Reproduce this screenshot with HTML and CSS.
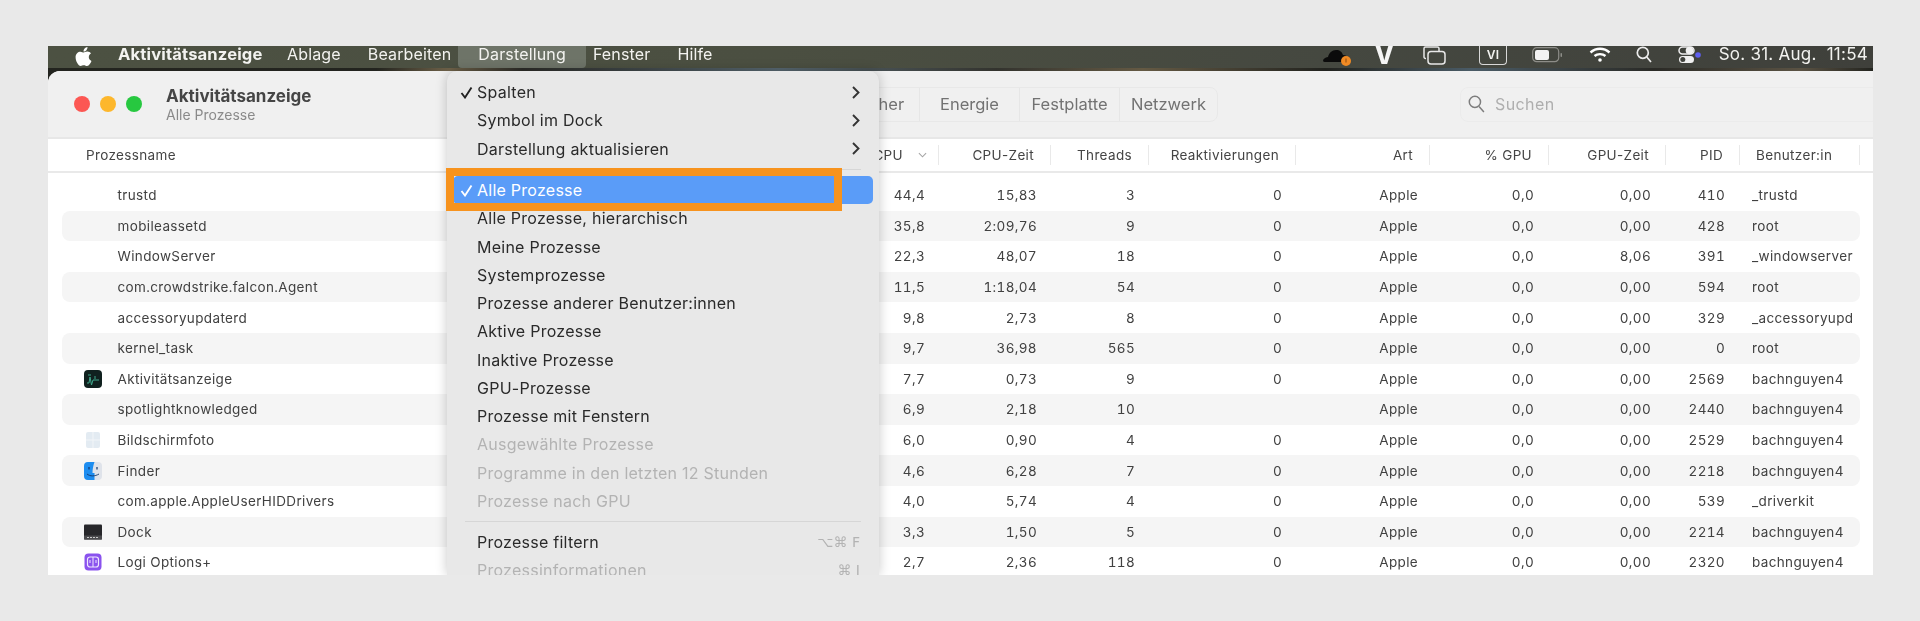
FILE: index.html
```html
<!DOCTYPE html>
<html lang="de">
<head>
<meta charset="utf-8">
<title>Aktivitätsanzeige</title>
<link rel="stylesheet" href="styles.css">
</head>
<body>
<div class="screen">
  <header class="menubar">
    <svg class="apple" viewBox="0 30 384 452"><path fill="#fff" d="M318.7 268.7c-.2-36.7 16.4-64.4 50-84.8-18.8-26.9-47.2-41.7-84.7-44.6-35.5-2.8-74.3 20.7-88.5 20.7-15 0-49.4-19.7-76.4-19.7C63.3 141.2 4 184.8 4 273.5q0 39.3 14.4 81.2c12.8 36.7 59 126.7 107.2 125.2 25.2-.6 43-17.9 75.8-17.9 31.8 0 48.3 17.9 76.4 17.9 48.6-.7 90.4-82.5 102.6-119.3-65.2-30.7-61.7-90-61.7-91.9zm-56.6-164.2c27.3-32.4 24.8-61.9 24-72.5-24.1 1.4-52 16.4-67.9 34.9-17.5 19.8-27.8 44.3-25.6 71.9 26.1 2 49.9-11.4 69.5-34.3z"/></svg>
    <span class="mb-item mb-app">Aktivitätsanzeige</span>
    <span class="mb-item">Ablage</span>
    <span class="mb-item">Bearbeiten</span>
    <span class="mb-item mb-open">Darstellung</span>
    <span class="mb-item">Fenster</span>
    <span class="mb-item">Hilfe</span>
    <div class="status">
      <svg class="st st-cloud" viewBox="0 0 30 20"><path fill="#0b0b0b" d="M1 15c0-2 2-3.500 5-4 1-4 4-7 8-7 4 0 6 2 7 5 3 0 5 2 5 4 0 2-1 3-3 3H4c-2 0-3-.5-3-1z"/><circle cx="24" cy="15" r="5" fill="#f08a24"/><path stroke="#8a4a10" stroke-width="1" d="M24 12.500v4"/></svg>
      <span class="st st-v">V</span>
      <svg class="st st-copy" viewBox="0 0 23 19" fill="none" stroke="#e8e8e8" stroke-width="1.500"><path d="M3 12.500H2.500a1.500 1.500 0 0 1-1.500-1.500V2.500A1.500 1.500 0 0 1 2.500 1h12A1.500 1.500 0 0 1 16 2.500V5"/><rect x="5" y="5.500" width="17" height="12.500" rx="3"/></svg>
      <span class="st st-vi">VI</span>
      <svg class="st st-batt" viewBox="0 0 31 16"><rect x=".7" y=".7" width="26" height="14" rx="4" fill="none" stroke="#8d8d88" stroke-width="1.200"/><rect x="3" y="3" width="14" height="10" rx="2" fill="#f2f2f2"/><rect x="28.500" y="6" width="1.500" height="4" rx=".7" fill="#8d8d88"/></svg>
      <svg class="st st-wifi" viewBox="0 0 22 17" fill="none" stroke="#fff" stroke-width="2.400"><path d="M1.500 6.500C7 1.500 15 1.500 20.500 6.500"/><path d="M5.500 10C8.500 7.500 13.500 7.500 16.500 10"/><circle cx="11" cy="14" r="1.800" fill="#fff" stroke="none"/></svg>
      <svg class="st st-search" viewBox="0 0 16 17" fill="none" stroke="#ececec" stroke-width="1.700"><circle cx="6.800" cy="6.800" r="5.500"/><path d="M10.800 11l4.200 5"/></svg>
      <svg class="st st-cc" viewBox="0 0 23 18"><rect x="1" y="1" width="15" height="7" rx="3.500" fill="none" stroke="#f0f0f0" stroke-width="1.500"/><circle cx="11.500" cy="4.500" r="3.800" fill="#f0f0f0"/><rect x="1" y="10" width="15" height="7" rx="3.500" fill="#f0f0f0"/><circle cx="4.800" cy="13.500" r="2.500" fill="#40423c"/><circle cx="20" cy="9" r="2.800" fill="#5f5ff0"/></svg>
      <span class="clock">So. 31. Aug.&nbsp; 11:54</span>
    </div>
  </header>

  <main class="window">
    <div class="toolbar">
      <div class="lights"><i class="light red"></i><i class="light yellow"></i><i class="light green"></i></div>
      <div class="titles">
        <div class="title">Aktivitätsanzeige</div>
        <div class="subtitle">Alle Prozesse</div>
      </div>
      <div class="tabs">
        <span class="tab">Speicher</span>
        <span class="tab">Energie</span>
        <span class="tab">Festplatte</span>
        <span class="tab tab-last">Netzwerk</span>
      </div>
      <div class="search">
        <svg class="search-icon" viewBox="0 0 16 17" fill="none" stroke="#7d7d7d" stroke-width="1.400"><circle cx="6.500" cy="6.500" r="5.300"/><path d="M10.400 10.800l4.600 5.200"/></svg>
        <span>Suchen</span>
      </div>
    </div>

    <div class="thead">
      <div class="th th-name">Prozessname</div>
      <div class="th th-cpu">CPU<svg class="sort" viewBox="0 0 10 6" fill="none" stroke="#a5a5a5" stroke-width="1.200"><path d="M1 1l4 4 4-4"/></svg></div>
      <div class="th">CPU-Zeit</div>
      <div class="th">Threads</div>
      <div class="th">Reaktivierungen</div>
      <div class="th">Art</div>
      <div class="th">% GPU</div>
      <div class="th">GPU-Zeit</div>
      <div class="th">PID</div>
      <div class="th th-user">Benutzer:in</div>
    </div>

    <div class="tbody">
      <div class="row"><div class="name"><span class="ico"></span>trustd</div><div class="n">44,4</div><div class="n">15,83</div><div class="n">3</div><div class="n">0</div><div class="n art">Apple</div><div class="n">0,0</div><div class="n">0,00</div><div class="n">410</div><div class="user">_trustd</div></div>
      <div class="row"><div class="name"><span class="ico"></span>mobileassetd</div><div class="n">35,8</div><div class="n">2:09,76</div><div class="n">9</div><div class="n">0</div><div class="n art">Apple</div><div class="n">0,0</div><div class="n">0,00</div><div class="n">428</div><div class="user">root</div></div>
      <div class="row"><div class="name"><span class="ico"></span>WindowServer</div><div class="n">22,3</div><div class="n">48,07</div><div class="n">18</div><div class="n">0</div><div class="n art">Apple</div><div class="n">0,0</div><div class="n">8,06</div><div class="n">391</div><div class="user">_windowserver</div></div>
      <div class="row"><div class="name"><span class="ico"></span>com.crowdstrike.falcon.Agent</div><div class="n">11,5</div><div class="n">1:18,04</div><div class="n">54</div><div class="n">0</div><div class="n art">Apple</div><div class="n">0,0</div><div class="n">0,00</div><div class="n">594</div><div class="user">root</div></div>
      <div class="row"><div class="name"><span class="ico"></span>accessoryupdaterd</div><div class="n">9,8</div><div class="n">2,73</div><div class="n">8</div><div class="n">0</div><div class="n art">Apple</div><div class="n">0,0</div><div class="n">0,00</div><div class="n">329</div><div class="user">_accessoryupdaterd</div></div>
      <div class="row"><div class="name"><span class="ico"></span>kernel_task</div><div class="n">9,7</div><div class="n">36,98</div><div class="n">565</div><div class="n">0</div><div class="n art">Apple</div><div class="n">0,0</div><div class="n">0,00</div><div class="n">0</div><div class="user">root</div></div>
      <div class="row"><div class="name"><span class="ico"><svg viewBox="0 0 18 18"><rect width="18" height="18" rx="4" fill="#10211f"/><path d="M3 13h2l1-6 1.500 8L9 10h6M4 5h3M11 6v3" fill="none" stroke="#3fa88c" stroke-width="1"/></svg></span>Aktivitätsanzeige</div><div class="n">7,7</div><div class="n">0,73</div><div class="n">9</div><div class="n">0</div><div class="n art">Apple</div><div class="n">0,0</div><div class="n">0,00</div><div class="n">2569</div><div class="user">bachnguyen4</div></div>
      <div class="row"><div class="name"><span class="ico"></span>spotlightknowledged</div><div class="n">6,9</div><div class="n">2,18</div><div class="n">10</div><div class="n"></div><div class="n art">Apple</div><div class="n">0,0</div><div class="n">0,00</div><div class="n">2440</div><div class="user">bachnguyen4</div></div>
      <div class="row"><div class="name"><span class="ico"><svg viewBox="0 0 18 18"><rect x="2" y="1" width="14" height="16" rx="2" fill="#e3ebf2"/><path d="M9 1v16M2 9h14" stroke="#f2f5f8" stroke-width="1"/></svg></span>Bildschirmfoto</div><div class="n">6,0</div><div class="n">0,90</div><div class="n">4</div><div class="n">0</div><div class="n art">Apple</div><div class="n">0,0</div><div class="n">0,00</div><div class="n">2529</div><div class="user">bachnguyen4</div></div>
      <div class="row"><div class="name"><span class="ico"><svg viewBox="0 0 18 18"><rect width="18" height="18" rx="4" fill="#dfe3ea"/><path d="M4 0h6.500C9 4 8.500 8 8.500 11H10.500V18H4a4 4 0 0 1-4-4V4a4 4 0 0 1 4-4z" fill="#1d8df0"/><path d="M3 12c3 2.500 8 2.500 12 0" fill="none" stroke="#12366a" stroke-width=".9"/><path d="M5 5v2.500M13 5v2.500" stroke="#12366a" stroke-width="1.200"/></svg></span>Finder</div><div class="n">4,6</div><div class="n">6,28</div><div class="n">7</div><div class="n">0</div><div class="n art">Apple</div><div class="n">0,0</div><div class="n">0,00</div><div class="n">2218</div><div class="user">bachnguyen4</div></div>
      <div class="row"><div class="name"><span class="ico"></span>com.apple.AppleUserHIDDrivers</div><div class="n">4,0</div><div class="n">5,74</div><div class="n">4</div><div class="n">0</div><div class="n art">Apple</div><div class="n">0,0</div><div class="n">0,00</div><div class="n">539</div><div class="user">_driverkit</div></div>
      <div class="row"><div class="name"><span class="ico"><svg viewBox="0 0 18 18"><rect y="1.500" width="18" height="15" rx="1" fill="#27272a"/><rect y="12.500" width="18" height="4" fill="#4a4a4d"/><path d="M3 14.500h12" stroke="#c8c8c8" stroke-width="1" stroke-dasharray="2 1"/></svg></span>Dock</div><div class="n">3,3</div><div class="n">1,50</div><div class="n">5</div><div class="n">0</div><div class="n art">Apple</div><div class="n">0,0</div><div class="n">0,00</div><div class="n">2214</div><div class="user">bachnguyen4</div></div>
      <div class="row"><div class="name"><span class="ico"><svg viewBox="0 0 18 18"><rect width="17" height="17" x=".5" y=".5" rx="4" fill="#8a52ee"/><rect x="3.500" y="4" width="11" height="10" rx="2.500" fill="none" stroke="#f0e8ff" stroke-width="1.200"/><path d="M9 4v10M6 7v3M12 7v3" stroke="#f0e8ff" stroke-width="1"/></svg></span>Logi Options+</div><div class="n">2,7</div><div class="n">2,36</div><div class="n">118</div><div class="n">0</div><div class="n art">Apple</div><div class="n">0,0</div><div class="n">0,00</div><div class="n">2320</div><div class="user">bachnguyen4</div></div>
    </div>
  </main>

  <nav class="menu">
    <div class="mi"><svg class="check" viewBox="0 0 13 13" fill="none" stroke="#222" stroke-width="1.900"><path d="M1.500 7l3.500 4.500L11.500 1.500"/></svg>Spalten<svg class="chev" viewBox="0 0 8 13" fill="none" stroke="#333" stroke-width="1.900"><path d="M1 1l5.500 5.500L1 12"/></svg></div>
    <div class="mi">Symbol im Dock<svg class="chev" viewBox="0 0 8 13" fill="none" stroke="#333" stroke-width="1.900"><path d="M1 1l5.500 5.500L1 12"/></svg></div>
    <div class="mi">Darstellung aktualisieren<svg class="chev" viewBox="0 0 8 13" fill="none" stroke="#333" stroke-width="1.900"><path d="M1 1l5.500 5.500L1 12"/></svg></div>
    <div class="sep"></div>
    <div class="mi mi-active"><svg class="check" viewBox="0 0 13 13" fill="none" stroke="#fff" stroke-width="1.900"><path d="M1.500 7l3.500 4.500L11.500 1.500"/></svg>Alle Prozesse</div>
    <div class="mi">Alle Prozesse, hierarchisch</div>
    <div class="mi">Meine Prozesse</div>
    <div class="mi">Systemprozesse</div>
    <div class="mi">Prozesse anderer Benutzer:innen</div>
    <div class="mi">Aktive Prozesse</div>
    <div class="mi">Inaktive Prozesse</div>
    <div class="mi">GPU-Prozesse</div>
    <div class="mi">Prozesse mit Fenstern</div>
    <div class="mi mi-off">Ausgewählte Prozesse</div>
    <div class="mi mi-off">Programme in den letzten 12 Stunden</div>
    <div class="mi mi-off">Prozesse nach GPU</div>
    <div class="sep sep-low"></div>
    <div class="mi">Prozesse filtern<span class="key">⌥⌘ F</span></div>
    <div class="mi mi-off">Prozessinformationen<span class="key">⌘ I</span></div>
  </nav>
  <div class="callout"></div>
</div>
</body>
</html>
```

FILE: styles.css
```css
* { box-sizing: border-box; }
html, body { margin: 0; height: 100%; }
body {
  background: #e9e9e9;
  font-family: Inter, "Noto Sans", "Liberation Sans", sans-serif;
  overflow: hidden;
}
.screen {
  position: relative;
  width: 1825px;
  height: 529px;
  margin: 46px 0 0 48px;
  filter: blur(.45px);
  background: linear-gradient(90deg, #23241f 0, #23241f 18%, #6f6249 22%, #2c2c28 26%, #56666f 40%, #33332e 52%, #645943 60%, #22231f 70%, #4a5b66 78%, #2a2a26 88%, #5a5243 96%, #23241f 100%);
}

/* menu bar */
.menubar {
  height: 22px;
  display: flex;
  align-items: flex-start;
  padding-left: 27px;
  color: #f3f3f0;
  font-size: 16px;
  line-height: 16px;
  letter-spacing: .15px;
  background: linear-gradient(90deg, #4c5142 0, #4b4f41 40%, #454840 70%, #3f403b 100%);
  white-space: nowrap;
}
.apple { width: 17px; height: 19px; margin-top: 1px; margin-right: 12.500px; flex: none; }
.mb-item { padding: 0 13.500px; }
.mb-app { font-weight: 700; font-size: 16.600px; padding-right: 11px; }
.mb-open {
  height: 22px;
  padding: 0 20px;
  margin: 0 -6.500px;
  background: #6e7468;
  border-radius: 0 0 4px 4px;
}
.status { margin-left: auto; display: flex; align-items: flex-start; padding-right: 5px; }
.st { flex: none; display: block; }
.st-cloud { width: 30px; height: 20px; margin-right: 23px; }
.st-v { width: 16px; margin-right: 32px; font-weight: 800; font-size: 24px; line-height: 20px; text-align: center; color: #f5f5f5; }
.st-copy { width: 23px; height: 19px; margin-right: 33px; }
.st-vi {
  width: 28px; height: 19px; margin-right: 25px;
  border: 1.500px solid #d8d8d8; border-top: 0; border-radius: 0 0 4px 4px;
  font-size: 12px; line-height: 17px; text-align: center; font-weight: 600;
}
.st-batt { width: 31px; height: 16px; margin: 1px 26px 0 0; }
.st-wifi { width: 22px; height: 17px; margin-right: 25px; }
.st-search { width: 16px; height: 17px; margin-right: 26px; }
.st-cc { width: 23px; height: 18px; margin-right: 17px; }
.clock { width: 150px; text-align: right; font-size: 17px; letter-spacing: .25px; }

/* window */
.window {
  height: 504px;
  margin-top: 3px;
  background: #fff;
  border-radius: 12px 0 0 0;
  overflow: hidden;
}
.toolbar {
  height: 66px;
  display: flex;
  align-items: center;
  padding-left: 26px;
  background: #f0f0f0;
}
.lights { display: flex; gap: 10px; flex: none; }
.light { width: 16px; height: 16px; border-radius: 50%; display: block; }
.red { background: #fc5753; }
.yellow { background: #fdb72c; }
.green { background: #27c840; }
.titles { margin-left: 24px; padding-top: 2px; }
.title { font-size: 17px; line-height: 20px; font-weight: 700; color: #454545; }
.subtitle { font-size: 14px; line-height: 18px; color: #8a8a8a; }
.tabs {
  margin-left: auto;
  height: 35px;
  display: flex;
  border: 1px solid #e8e8e8;
  border-radius: 8px;
  font-size: 16.500px;
  color: #727272;
}
.tab {
  width: 100px;
  display: flex;
  align-items: center;
  justify-content: center;
  position: relative;
  border-right: 1px solid #e6e6e6;
}
.tab-last { width: 97px; border-right: 0; }
.search {
  flex: none;
  width: 420px;
  height: 35px;
  margin: 0 -7px 0 242px;
  border: 1px solid #ebebeb;
  border-radius: 8px;
  display: flex;
  align-items: center;
  padding-left: 7px;
  color: #aeaeae;
  font-size: 16px;
  letter-spacing: .4px;
}
.search-icon { width: 17px; height: 18px; margin-right: 10px; }

/* table */
.thead {
  height: 36px;
  display: grid;
  grid-template-columns: 812px 79px 112px 98px 147px 134px 119px 117px 74px 120px;
  align-items: center;
  border-top: 2px solid #e7e7e7;
  border-bottom: 2px solid #e9e9e9;
  font-size: 13.500px;
  letter-spacing: .35px;
  color: #444;
}
.th {
  height: 20px;
  line-height: 20px;
  text-align: right;
  padding-right: 16px;
  border-right: 1px solid #e9e9e9;
  white-space: nowrap;
}
.th-name { text-align: left; padding-left: 38px; border-right: 0; }
.th-cpu { display: flex; align-items: center; justify-content: flex-end; padding-right: 11px; }
.sort { width: 9px; height: 6px; margin-left: 15px; }
.th-user { text-align: left; padding-left: 16px; padding-right: 0; }
.tbody { padding: 7px 13px 0 14px; }
.row {
  height: 30.600px;
  display: grid;
  grid-template-columns: 798px 65px 112px 98px 147px 134px 118px 117px 74px 128px;
  align-items: center;
  border-radius: 8px;
  font-size: 13.500px;
  letter-spacing: .36px;
  color: #414141;
  white-space: nowrap;
  font-variant-numeric: tabular-nums;
}
.row:nth-child(even) { background: #f5f5f5; }
.name { display: flex; align-items: center; padding-left: 22px; }
.ico { width: 18px; height: 18px; margin-right: 15.500px; flex: none; }
.ico svg { display: block; width: 18px; height: 18px; }
.n { text-align: right; }
.art { transform: translateX(2px); }
.user { padding-left: 27px; overflow: hidden; }

/* open menu */
.menu {
  position: absolute;
  left: 399px;
  top: 25px;
  width: 432px;
  height: 504px;
  overflow: hidden;
  clip-path: inset(-20px -20px 0 -20px);
  padding-top: 7px;
  background: #e8e8e8;
  border-radius: 10px 10px 0 0;
  box-shadow: 0 0 12px rgba(0, 0, 0, .22);
  font-size: 16px;
  letter-spacing: .25px;
  color: #2a2a2a;
}
.mi {
  height: 28.250px;
  margin: 0 6px;
  padding: 0 13px 0 24px;
  display: flex;
  align-items: center;
  justify-content: space-between;
  position: relative;
  white-space: nowrap;
}
.mi-active { background: #5a9cf8; color: #fff; border-radius: 5px; }
.mi-off { color: #b3b3b3; }
.check { position: absolute; left: 7px; top: 8px; width: 13px; height: 13px; }
.chev { width: 8px; height: 13px; flex: none; }
.sep { height: 1px; margin: 6px 18px 6.250px; background: #d6d6d6; }
.sep-low { margin-top: 5.500px; margin-bottom: 6px; }
.key { color: #b3b3b3; font-family: "DejaVu Sans", sans-serif; font-size: 14px; letter-spacing: 0; }
.callout {
  position: absolute;
  left: 398px;
  top: 122px;
  width: 396px;
  height: 43px;
  border: 8px solid #f7931e;
}
```
